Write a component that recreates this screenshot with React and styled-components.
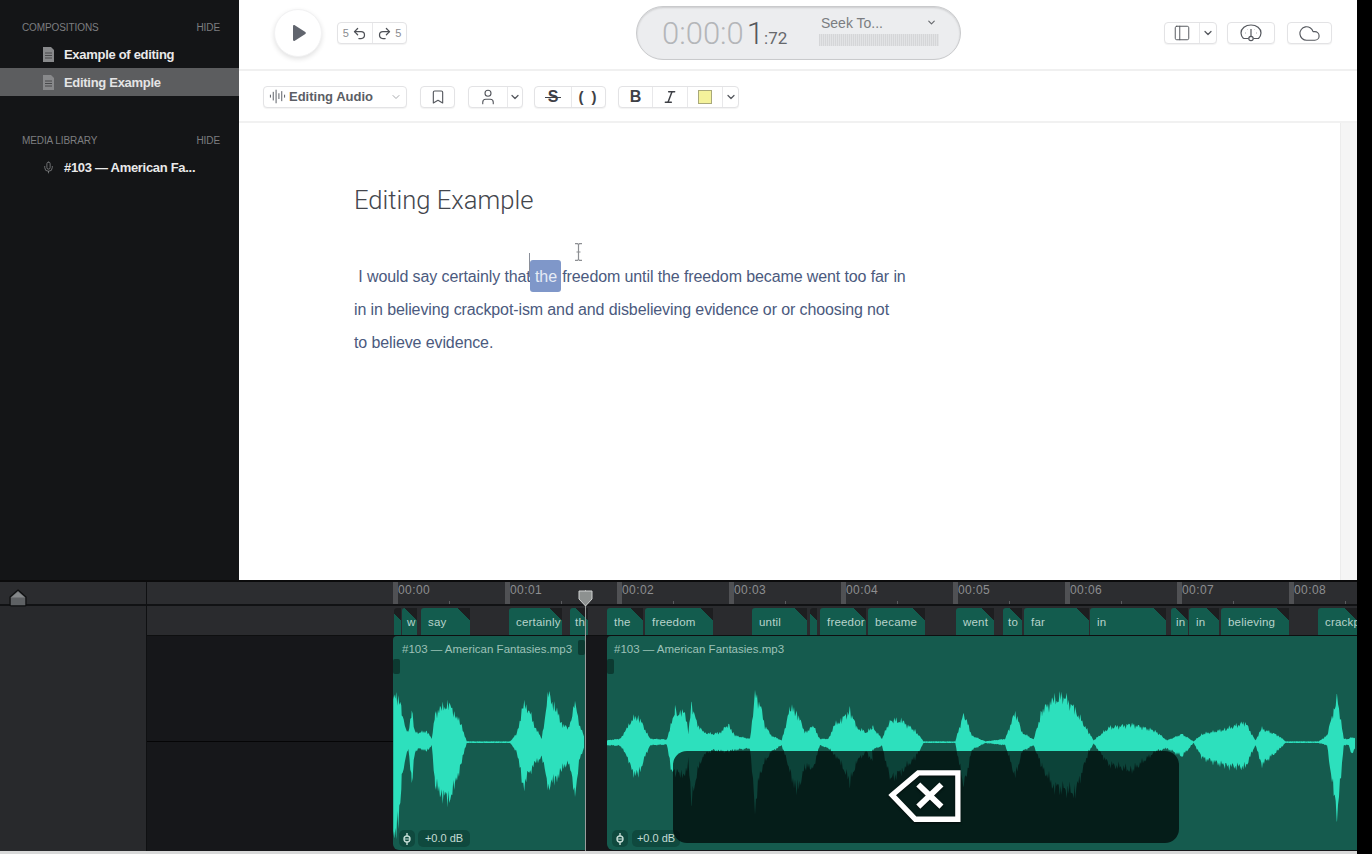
import React from 'react';
import styled, { createGlobalStyle } from 'styled-components';
import {
  AudioLines, Bookmark, ChevronDown, Cloud, Italic, Mic, PanelLeft, Redo2, Undo2, User,
} from 'lucide-react';

const GlobalStyle = createGlobalStyle`
  html, body { margin: 0; padding: 0; background: #000; overflow: hidden; }
  body { font-family: "Liberation Sans", Arial, sans-serif; }
  * { box-sizing: border-box; }
`;

const Screen = styled.div`
  width: 1357px;
  height: 854px;
  display: flex;
  flex-direction: column;
  background: #fff;
`;

const Workspace = styled.div`
  height: 580px;
  display: flex;
`;

/* sidebar */
const Sidebar = styled.aside`
  width: 239px;
  flex-shrink: 0;
  background: #141517;
  padding-top: 21px;
`;

const SectionHead = styled.div`
  height: 12px;
  padding: 0 19px 0 22px;
  display: flex;
  justify-content: space-between;
  align-items: center;
  font-size: 10px;
  color: #7d7e80;
  letter-spacing: -0.1px;
`;

const SideItem = styled.div`
  height: 28px;
  display: flex;
  align-items: center;
  gap: 9px;
  padding-left: 42px;
  font-size: 13px;
  font-weight: 700;
  letter-spacing: -0.3px;
  color: ${p => (p.$active ? '#e4e4e5' : '#e9e9ea')};
  background: ${p => (p.$active ? '#5c5d5f' : 'transparent')};
  svg { flex-shrink: 0; }
`;

const SideList = styled.div`
  margin-top: 7px;
  margin-bottom: 38px;
`;

const SideListMedia = styled(SideList)`
  margin-top: 7px;
`;

/* right side */
const Main = styled.main`
  flex: 1;
  min-width: 0;
  display: flex;
  flex-direction: column;
`;

const TopBar = styled.header`
  height: 71px;
  flex-shrink: 0;
  display: flex;
  align-items: flex-start;
  padding: 0 25px 0 35px;
  border-bottom: 2px solid #f0f0f0;
`;

const PlayButton = styled.button`
  width: 48px;
  height: 48px;
  margin-top: 9px;
  border: 1px solid #f2f2f3;
  border-radius: 50%;
  background: #fff;
  box-shadow: 0 2px 5px rgba(0, 0, 0, 0.12);
  display: flex;
  align-items: center;
  justify-content: center;
  padding: 0 0 0 2px;
`;

const BtnGroup = styled.div`
  display: flex;
  height: 22px;
  width: ${p => p.$w}px;
  margin-top: ${p => p.$top || 0}px;
  margin-left: ${p => p.$ml || 0}px;
  border: 1px solid #e3e3e5;
  border-radius: 4px;
  background: #fff;
  box-shadow: 0 1px 1px rgba(0, 0, 0, 0.05);
  color: #55585e;
`;

const BtnCell = styled.div`
  flex: ${p => (p.$w ? `0 0 ${p.$w}px` : 1)};
  display: flex;
  align-items: center;
  justify-content: center;
  gap: 3px;
  font-size: ${p => p.$fs || 11}px;
  color: ${p => p.$color || 'inherit'};
  & + & { border-left: 1px solid #e8e8ea; }
`;

const Timer = styled.div`
  width: 325px;
  height: 54px;
  margin: 6px 0 0 229px;
  border: 1px solid #c9cacc;
  border-radius: 27px;
  background: #ecedef;
  box-shadow: inset 0 1px 2px rgba(0, 0, 0, 0.14);
  display: flex;
  padding-left: 25px;
  font-family: Roboto, "Liberation Sans", sans-serif;
`;

const Clock = styled.div`
  width: 157px;
  padding-top: 9px;
  font-size: 31px;
  line-height: 36px;
  font-weight: 300;
  color: #b4b6b9;
  white-space: nowrap;
`;

const ClockNow = styled.span`
  color: #55575b;
  margin-left: 3px;
`;

const ClockFrac = styled.span`
  color: #66686c;
  font-size: 17px;
  font-weight: 400;
`;

const Seek = styled.div`
  width: 120px;
  padding-top: 7px;
`;

const SeekHead = styled.div`
  display: flex;
  justify-content: space-between;
  align-items: center;
  height: 17px;
  padding: 0 2px;
  font-family: "Liberation Sans", sans-serif;
  font-size: 14px;
  color: #7b7d81;
`;

const SeekBar = styled.div`
  height: 12px;
  margin-top: 3px;
  background: repeating-linear-gradient(90deg, #d5d6d8 0 1px, #e2e3e5 1px 2px);
`;

const RightTools = styled.div`
  margin-left: auto;
  display: flex;
  gap: 10px;
  margin-top: 22px;
`;

const FormatBar = styled.div`
  height: 52px;
  flex-shrink: 0;
  display: flex;
  align-items: center;
  gap: 12px;
  padding: 1px 0 0 24px;
  border-bottom: 2px solid #f1f1f1;
`;

const AudioSelect = styled(BtnGroup)`
  align-items: center;
  padding: 0 4px 0 5px;
  gap: 3px;
  font-size: 13px;
  font-weight: 700;
  color: #5b5e65;
`;

const SelectLabel = styled.span`
  flex: 1;
  white-space: nowrap;
`;

const Swatch = styled.span`
  width: 14px;
  height: 14px;
  background: #f4f29b;
  border: 1px solid #a9a97a;
`;

const BoldGlyph = styled.span`
  font-size: 16px;
  font-weight: 700;
  color: #3e4046;
`;

const StrikeGlyph = styled.span`
  position: relative;
  font-size: 16px;
  font-weight: 700;
  color: #3e4046;
  &::after {
    content: '';
    position: absolute;
    left: -3px;
    right: -3px;
    top: 9px;
    height: 1.5px;
    background: #3e4046;
  }
`;

const Parens = styled.span`
  font-size: 15px;
  font-weight: 700;
  letter-spacing: 2px;
  color: #3e4046;
`;

const Editor = styled.div`
  flex: 1;
  min-height: 0;
  display: flex;
`;

const Doc = styled.div`
  flex: 1;
  position: relative;
  padding: 62px 0 0 115px;
`;

const Title = styled.h1`
  margin: 0;
  font-family: Roboto, "Liberation Sans", sans-serif;
  font-size: 25.6px;
  line-height: 30px;
  font-weight: 300;
  color: #43464d;
`;

const Para = styled.div`
  margin-top: 45px;
  font-size: 16px;
  line-height: 33px;
  color: #4b5a7e;
  letter-spacing: -0.11px;
`;

const Line = styled.div`
  white-space: nowrap;
`;

const Selected = styled.span`
  position: relative;
  display: inline-block;
  height: 32px;
  margin: 0 -3px 0 -5px;
  padding: 0 4px 0 5px;
  border-radius: 3px;
  background: #7f97c9;
  color: #e6ecf6;
  &::before {
    content: '';
    position: absolute;
    left: -1px;
    top: -7px;
    width: 1px;
    height: 24px;
    background: #8a8f99;
  }
`;

const IBeam = styled.svg`
  position: absolute;
  left: 335px;
  top: 120px;
`;

const ScrollTrack = styled.div`
  width: 17px;
  flex-shrink: 0;
  background: #f5f5f5;
  border-left: 1px solid #ececec;
`;

/* timeline */
const Timeline = styled.section`
  height: 271px;
  flex-shrink: 0;
  display: grid;
  grid-template-columns: 147px 1fr;
  background: #16171a;
  border-top: 2px solid #0b0b0c;
  color: #8a8b8d;
`;

const LeftRail = styled.div`
  background: #28292c;
  border-right: 1px solid #0f1012;
`;

const RailHead = styled.div`
  height: 24px;
  padding: 7px 0 0 9px;
  border-bottom: 2px solid #111214;
  background: #2b2c2f;
  svg { display: block; }
`;

const Tracks = styled.div`
  position: relative;
  overflow: hidden;
`;

const Ruler = styled.div`
  position: relative;
  height: 24px;
  background: #2c2d30;
  border-bottom: 2px solid #111214;
`;

const Tick = styled.div`
  position: absolute;
  top: 0;
  bottom: 0;
  width: 1px;
  background: #505154;
  padding-left: 5px;
  font-size: 12px;
  line-height: 17px;
  letter-spacing: 0.4px;
  color: #8d8e90;
  white-space: nowrap;
`;

const MidTick = styled.div`
  position: absolute;
  bottom: 0;
  width: 1px;
  height: 3px;
  background: #5a5b5e;
`;

const WordRow = styled.div`
  position: relative;
  height: 30px;
  background: #2a2b2e;
  border-bottom: 1px solid #0e0f10;
`;

const Word = styled.div`
  position: absolute;
  top: 2px;
  bottom: 0;
  padding-left: ${p => (p.$narrow ? 5 : 7)}px;
  border-radius: 3px 0 0 0;
  background: linear-gradient(225deg, #1d1e20 9px, #135c4e 9px);
  color: #b7d3cb;
  font-size: 11.5px;
  line-height: 28px;
  letter-spacing: 0.2px;
  overflow: hidden;
  white-space: nowrap;
`;

const Lane = styled.div`
  position: relative;
  height: 215px;
  &::before {
    content: '';
    position: absolute;
    left: 0;
    width: 246px;
    top: 105px;
    height: 1px;
    background: #050506;
  }
`;

const Clip = styled.div`
  position: absolute;
  top: 0;
  bottom: 1px;
  background: #155b4e;
  border-radius: 4px 0 0 6px;
  overflow: hidden;
`;

const ClipName = styled.div`
  position: absolute;
  top: 6px;
  left: ${p => p.$x}px;
  font-size: 11.5px;
  line-height: 14px;
  color: #9dc2b8;
  white-space: nowrap;
`;

const Wave = styled.svg`
  position: absolute;
  left: 0;
  top: 0;
`;

const Grip = styled.div`
  position: absolute;
  width: 7px;
  height: 15px;
  border-radius: 2px;
  background: rgba(10, 50, 42, 0.8);
`;

const Pill = styled.div`
  position: absolute;
  bottom: 3px;
  height: 17px;
  border-radius: 5px;
  background: rgba(5, 40, 33, 0.35);
  color: #c4dcd5;
  font-size: 11px;
  line-height: 17px;
  text-align: center;
  display: flex;
  align-items: center;
  justify-content: center;
`;

const Hud = styled.div`
  position: absolute;
  left: 526px;
  top: 115px;
  width: 506px;
  height: 92px;
  border-radius: 14px;
  background: rgba(0, 6, 5, 0.72);
`;

const HudIcon = styled.svg`
  position: absolute;
  left: 215px;
  top: 19px;
  filter: drop-shadow(0 1px 1px rgba(0, 0, 0, 0.6));
`;

const Playhead = styled.div`
  position: absolute;
  left: 438px;
  top: 8px;
  bottom: 0;
  width: 1px;
  background: #989c9b;
`;

const PlayheadCap = styled.svg`
  position: absolute;
  left: -7px;
  top: 0;
`;

const BottomEdge = styled.div`
  height: 3px;
  flex-shrink: 0;
  background: #d8d9d9;
`;

// envelopes read off the reference at 3x: [x, top, bottom], centre line at 500
const clipAEnv = [[40,365,780],[55,355,770],[65,400,620],[75,450,560],[85,470,520],[95,400,630],[105,470,530],[120,470,520],[140,465,530],[155,490,510],[165,410,640],[185,395,660],[205,380,685],[225,410,640],[245,450,560],[260,498,503],[390,498,503],[410,475,530],[430,385,640],[445,395,600],[465,450,570],[485,490,545],[505,350,640],[525,390,620],[545,440,590],[565,460,560],[585,380,660],[600,450,550],[615,490,510]];
const clipBEnv = [[680,495,510],[720,490,512],[740,460,540],[755,430,590],[775,418,608],[790,450,560],[810,490,510],[860,492,508],[875,440,590],[885,395,600],[895,420,590],[912,390,620],[925,470,560],[935,380,690],[950,440,600],[970,470,540],[1000,475,525],[1020,470,530],[1045,445,530],[1065,480,525],[1110,490,520],[1125,352,705],[1140,380,600],[1155,450,560],[1175,480,530],[1205,495,510],[1230,395,590],[1250,405,660],[1275,470,580],[1300,450,580],[1320,490,510],[1345,490,520],[1365,445,540],[1385,430,570],[1410,400,630],[1430,455,560],[1460,470,530],[1480,450,570]];
const clipBEnv2 = [[0,450,525],[30,490,512],[55,430,620],[90,435,590],[130,465,550],[155,498,503],[250,498,503],[275,410,640],[300,480,525],[340,498,503],[400,490,510],[430,405,610],[450,470,530],[485,492,510],[510,400,580],[545,370,640],[575,355,650],[610,400,660],[650,470,530],[665,495,505],[710,455,570],[780,445,590],[850,465,530],[885,495,520],[930,475,545],[965,498,503],[990,475,550],[1060,460,575],[1120,438,580],[1150,495,510],[1170,458,570],[1220,480,525],[1240,498,503],[1340,498,503],[1365,480,510],[1385,400,660],[1395,352,745],[1415,490,510],[1430,490,510],[1440,485,540],[1452,490,510]];

const toPage = (env, offset) => env.map(([x, t, b]) => [offset + x / 3, (500 - t) / 3, (b - 500) / 3]);

function wavePath(env, clipLeft, mid) {
  const top = [];
  const bottom = [];
  for (let i = 0; i < env.length - 1; i++) {
    const [x0, u0, d0] = env[i];
    const [x1, u1, d1] = env[i + 1];
    for (let x = x0; x < x1; x += 1) {
      const k = (x - x0) / (x1 - x0);
      const jitter = 0.94 + 0.12 * Math.sin(x * 2.7) + 0.08 * Math.sin(x * 7.3);
      top.push(`${(x - clipLeft).toFixed(1)},${(mid - (u0 + (u1 - u0) * k) * jitter).toFixed(1)}`);
      bottom.unshift(`${(x - clipLeft).toFixed(1)},${(mid + (d0 + (d1 - d0) * k) * jitter).toFixed(1)}`);
    }
  }
  return `M${top.join('L')}L${bottom.join('L')}Z`;
}

const pathA = wavePath(toPage(clipAEnv, 380), 393, 106);
const pathB = wavePath([...toPage(clipBEnv, 380), ...toPage(clipBEnv2, 872)], 607, 106);

const words = [
  ['', 393.5, 7], ['w', 402, 15, true], ['say', 421, 49], ['certainly', 509, 53], ['th', 570, 18, true],
  ['the', 607, 36], ['freedom', 645, 68], ['until', 752, 55], ['', 810, 7], ['freedor', 820, 46],
  ['became', 868, 57], ['went', 956, 38], ['to', 1003, 19, true], ['far', 1024, 65], ['in', 1090, 76],
  ['in', 1171, 17, true], ['in', 1189, 30], ['believing', 1221, 68], ['crackp', 1318, 39],
];

const ticks = ['00:00', '00:01', '00:02', '00:03', '00:04', '00:05', '00:06', '00:07', '00:08'];

const DocIcon = () => (
  <svg width="13" height="15" viewBox="0 0 13 15">
    <path d="M1 0h8l3 3v12H1z" fill="#88898b" />
    <path d="M3 6h7M3 8.500h7M3 11h7" stroke="#48494b" strokeWidth="1" />
  </svg>
);

const Gauge = () => (
  <svg width="22" height="18" viewBox="0 0 22 18" fill="none" stroke="#55585e" strokeWidth="1.2">
    <path d="M3.500 14.500h5M13.500 14.500h5c1.600-1.600 2.500-3.500 2.500-5.500a10 8 0 0 0-20 0c0 2 .9 3.900 2.500 5.500" />
    <circle cx="11" cy="14.500" r="2.200" />
    <path d="M11 12V5M5 9h.5M16.500 9h.5M7.500 5.500h.2M14.300 5.500h.2" />
  </svg>
);

const MicPill = () => (
  <svg width="10" height="12" viewBox="0 0 10 12" fill="none" stroke="#c4dcd5" strokeWidth="1.4">
    <path d="M5 0v3M5 9v3" />
    <circle cx="5" cy="6" r="3" />
    <path d="M2 6h6" strokeWidth="1" />
  </svg>
);

export default function App() {
  return (
    <>
      <GlobalStyle />
      <Screen>
        <Workspace>
          <Sidebar>
            <SectionHead><span>COMPOSITIONS</span><span>HIDE</span></SectionHead>
            <SideList>
              <SideItem><DocIcon />Example of editing</SideItem>
              <SideItem $active><DocIcon />Editing Example</SideItem>
            </SideList>
            <SectionHead><span>MEDIA LIBRARY</span><span>HIDE</span></SectionHead>
            <SideListMedia>
              <SideItem><Mic size={13} strokeWidth={1.4} color="#8a8b8d" />#103 — American Fa...</SideItem>
            </SideListMedia>
          </Sidebar>

          <Main>
            <TopBar>
              <PlayButton>
                <svg width="13" height="16" viewBox="0 0 13 16"><path d="M0 1.200C0 .2 1 -.3 1.800.2l10.500 6.800c.7.5.7 1.500 0 2L1.800 15.800C1 16.300 0 15.800 0 14.800z" fill="#61656e" /></svg>
              </PlayButton>
              <BtnGroup $w={70} $top={22} $ml={15}>
                <BtnCell $color="#8a8c90"><span>5</span><Undo2 size={15} color="#4e5157" /></BtnCell>
                <BtnCell $color="#8a8c90"><Redo2 size={15} color="#4e5157" /><span>5</span></BtnCell>
              </BtnGroup>
              <Timer>
                <Clock>0:00:0<ClockNow>1</ClockNow><ClockFrac>:72</ClockFrac></Clock>
                <Seek>
                  <SeekHead><span>Seek To...</span><ChevronDown size={11} strokeWidth={2.5} color="#66686c" /></SeekHead>
                  <SeekBar />
                </Seek>
              </Timer>
              <RightTools>
                <BtnGroup $w={53} $ml={-2}>
                  <BtnCell $w={34}><PanelLeft size={18} strokeWidth={1.3} /></BtnCell>
                  <BtnCell><ChevronDown size={12} strokeWidth={2.5} /></BtnCell>
                </BtnGroup>
                <BtnGroup $w={48}><BtnCell><Gauge /></BtnCell></BtnGroup>
                <BtnGroup $w={45} $ml={2}><BtnCell><Cloud size={23} strokeWidth={1.2} /></BtnCell></BtnGroup>
              </RightTools>
            </TopBar>

            <FormatBar>
              <AudioSelect $w={144}>
                <AudioLines size={17} strokeWidth={1.4} />
                <SelectLabel>Editing Audio</SelectLabel>
                <ChevronDown size={12} color="#a8aaae" />
              </AudioSelect>
              <BtnGroup $w={35} $ml={1}><BtnCell><Bookmark size={16} strokeWidth={1.7} /></BtnCell></BtnGroup>
              <BtnGroup $w={55} $ml={1}>
                <BtnCell $w={38}><User size={18} strokeWidth={1.5} /></BtnCell>
                <BtnCell><ChevronDown size={12} strokeWidth={2.5} /></BtnCell>
              </BtnGroup>
              <BtnGroup $w={72} $ml={-1}>
                <BtnCell $w={36}><StrikeGlyph>S</StrikeGlyph></BtnCell>
                <BtnCell><Parens>( )</Parens></BtnCell>
              </BtnGroup>
              <BtnGroup $w={121}>
                <BtnCell $w={33}><BoldGlyph>B</BoldGlyph></BtnCell>
                <BtnCell $w={35}><Italic size={16} strokeWidth={2.2} color="#3e4046" /></BtnCell>
                <BtnCell $w={35}><Swatch /></BtnCell>
                <BtnCell><ChevronDown size={12} strokeWidth={2.5} /></BtnCell>
              </BtnGroup>
            </FormatBar>

            <Editor>
              <Doc>
                <Title>Editing Example</Title>
                <Para>
                  <Line>{'\u00a0'}I would say certainly that <Selected>the</Selected> freedom until the freedom became went too far in</Line>
                  <Line>in in believing crackpot-ism and and disbelieving evidence or or choosing not</Line>
                  <Line>to believe evidence.</Line>
                </Para>
                <IBeam width="9" height="18" viewBox="0 0 9 18" fill="none" stroke="#8d8f93" strokeWidth="1.2">
                  <path d="M1 .6h2.500L4.500 1.600 5.500.6H8M4.500 1.600v14.800M1 17.400h2.500l1-1 1 1H8M2.500 9h4" />
                </IBeam>
              </Doc>
              <ScrollTrack />
            </Editor>
          </Main>
        </Workspace>

        <Timeline>
          <LeftRail>
            <RailHead>
              <svg width="18" height="18" viewBox="0 0 17 17">
                <path d="M8.500 1L16 7.500V15a1 1 0 0 1-1 1H2a1 1 0 0 1-1-1V7.500z" fill="#5e6164" stroke="#0d0e0f" strokeWidth="1.200" />
                <path d="M8.500 2.500L15 8H2z" fill="#85888a" />
              </svg>
            </RailHead>
          </LeftRail>
          <Tracks>
            <Ruler>
              {ticks.map((t, i) => (
                <React.Fragment key={t}>
                  <Tick style={{ left: 246 + i * 112 }}>{t}</Tick>
                  <MidTick style={{ left: 302 + i * 112 }} />
                </React.Fragment>
              ))}
            </Ruler>
            <WordRow>
              {words.map(([text, x, w, narrow], i) => (
                <Word key={i} $narrow={narrow} style={{ left: x - 147, width: w }}>{text}</Word>
              ))}
            </WordRow>
            <Lane>
              <Clip style={{ left: 246, width: 192 }}>
                <ClipName $x={9}>#103 — American Fantasies.mp3</ClipName>
                <Wave width="192" height="213"><path d={pathA} fill="#2de0bd" /></Wave>
                <Grip style={{ left: 0, top: 23 }} />
                <Grip style={{ right: 0, top: 4 }} />
                <Pill style={{ left: 6, width: 16 }}><MicPill /></Pill>
                <Pill style={{ left: 25, width: 52 }}>+0.0 dB</Pill>
              </Clip>
              <Clip style={{ left: 460, width: 750 }}>
                <ClipName $x={7}>#103 — American Fantasies.mp3</ClipName>
                <Wave width="750" height="213"><path d={pathB} fill="#2de0bd" /></Wave>
                <Grip style={{ left: 0, top: 23 }} />
                <Pill style={{ left: 5, width: 16 }}><MicPill /></Pill>
                <Pill style={{ left: 25, width: 48 }}>+0.0 dB</Pill>
              </Clip>
              <Hud>
                <HudIcon width="76" height="56" viewBox="0 0 78 58" fill="none" stroke="#fff" strokeWidth="5.500">
                  <path d="M4 26L31 3h41v48H28z" />
                  <path d="M31 15l24 23M55 15L31 38" strokeWidth="6" />
                </HudIcon>
              </Hud>
            </Lane>
            <Playhead>
              <PlayheadCap width="15" height="17" viewBox="0 0 15 17">
                <path d="M1 1h13v8l-6.500 7L1 9z" fill="#8d9190" stroke="#cfd2d1" strokeWidth="1" />
              </PlayheadCap>
            </Playhead>
          </Tracks>
        </Timeline>
        <BottomEdge />
      </Screen>
    </>
  );
}
